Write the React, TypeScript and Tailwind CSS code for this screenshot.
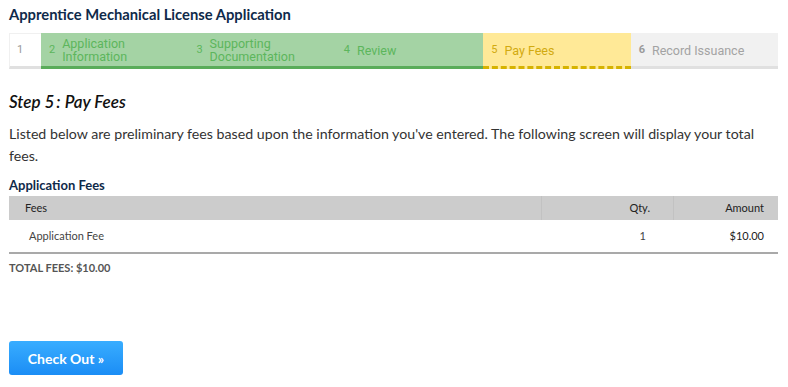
import React from 'react';

const STEPS = [
  { n: '2', label: ['Application', 'Information'], state: 'done' },
  { n: '3', label: ['Supporting', 'Documentation'], state: 'done' },
  { n: '4', label: ['Review'], state: 'done' },
  { n: '5', label: ['Pay Fees'], state: 'current' },
  { n: '6', label: ['Record Issuance'], state: 'todo' },
];

const stepBox: Record<string, string> = {
  done: 'bg-[#a4d3a4] text-[#5cb65c] border-b-[3px] border-[#5aac5a]',
  current: 'bg-[#ffe997] text-[#d2aa10] border-b-[3px] border-dashed border-[#d6b300]',
  todo: 'bg-[#f1f1f1] text-[#a3a3a3] border-b-[3px] border-[#e0e0e0]',
};

export default function App() {
  return (
    <div className="w-[788px] h-[387px] bg-white pl-[9px] pr-[10px] pt-[5px] font-['Lato',sans-serif] text-[#333]">
      <h1 className="text-[14.75px] font-bold text-[#0f2a4a] leading-[18px]">
        Apprentice Mechanical License Application
      </h1>

      {/* progress bar */}
      <div className="mt-[10px] flex h-[36px] font-['Roboto',sans-serif] text-[12px]">
        <div className="w-[32px] bg-white border-t border-l border-[#f0f0f0] border-b-[3px] border-b-[#e0e0e0] flex items-center pl-[7px] text-[#999] text-[11px]">
          1
        </div>
        {STEPS.map((s) => (
          <div key={s.n} className={`flex-1 flex items-center pl-[8px] pt-[1px] ${stepBox[s.state]}`}>
            <span className={`text-[11px] mr-[7px] ${s.state === 'todo' ? 'font-bold text-[#9a9a9a]' : ''}`}>{s.n}</span>
            <span className="flex flex-col text-[12.5px] leading-[13px]">
              {s.label.map((l) => (
                <span key={l}>{l}</span>
              ))}
            </span>
          </div>
        ))}
      </div>

      <h2 className="mt-[22px] text-[17px] italic font-semibold text-[#111] leading-[22px]">
        Step 5<span className="ml-[2px] mr-[4px]">:</span>Pay Fees
      </h2>

      <p className="mt-[10px] max-w-[762px] text-[14.2px] leading-[22px] text-[#333]">
        Listed below are preliminary fees based upon the information you've entered. The following screen will display your total fees.
      </p>

      <h3 className="mt-[10px] text-[13px] font-bold text-[#0f2a4a] leading-[16px]">Application Fees</h3>

      <div className="mt-[3px] border-b-2 border-[#a9a9a9]">
        <div className="flex h-[24px] bg-[#cccccc] text-[11px] text-[#222] items-center">
          <div className="flex-1 pl-[16px] h-full flex items-center">Fees</div>
          <div className="w-[132px] h-full flex items-center justify-end pr-[23px] border-l border-[#c2c2c2]">Qty.</div>
          <div className="w-[105px] h-full flex items-center justify-end pr-[14px] border-l border-[#c2c2c2]">Amount</div>
        </div>
        <div className="flex h-[32px] text-[11px] text-[#444] items-center">
          <div className="flex-1 pl-[20px]">Application Fee</div>
          <div className="w-[132px] text-right pr-[27px]">1</div>
          <div className="w-[105px] text-right pr-[14px] text-[#222]">$10.00</div>
        </div>
      </div>

      <div className="mt-[7px] text-[11px] font-bold text-[#555] leading-[14px]">TOTAL FEES: $10.00</div>

      <button className="mt-[66px] w-[114px] h-[34px] rounded-[3px] bg-gradient-to-b from-[#38adff] to-[#1b8df5] text-white font-bold text-[14px] font-['Lato',sans-serif]">
        Check Out »
      </button>
    </div>
  );
}
